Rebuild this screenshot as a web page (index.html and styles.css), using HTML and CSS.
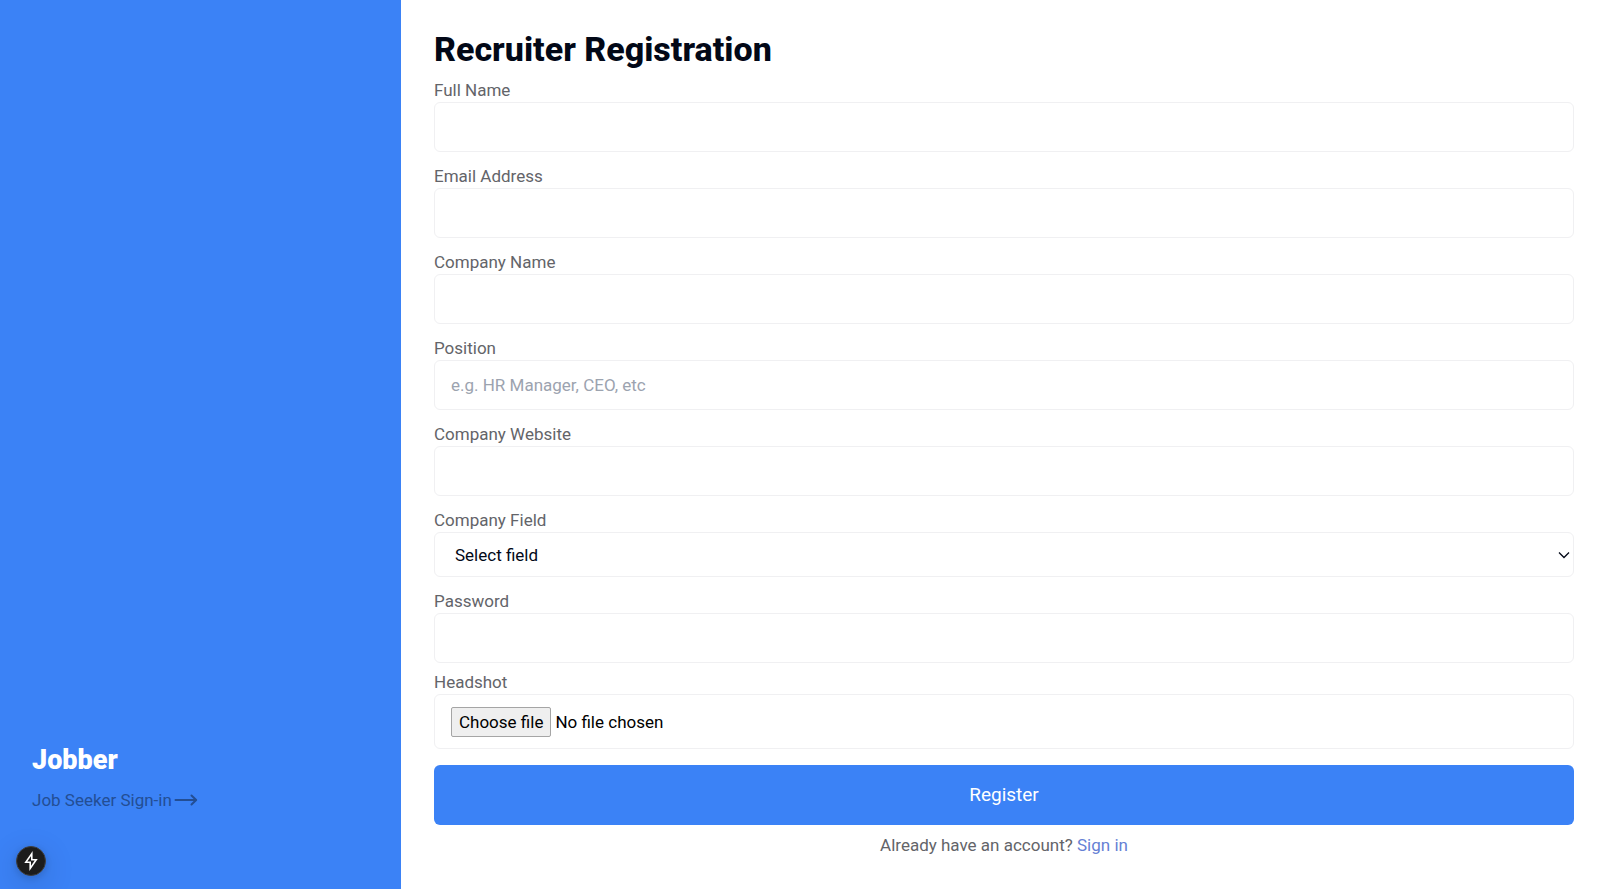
FILE: index.html
```html
<!DOCTYPE html>
<html lang="en">
<head>
<meta charset="utf-8">
<meta name="viewport" content="width=device-width, initial-scale=1">
<title>Recruiter Registration</title>
<link rel="stylesheet" href="styles.css">
</head>
<body>
<div class="layout">
  <aside class="sidebar">
    <h2 class="brand">Jobber</h2>
    <a class="seeker-link" href="#">Job Seeker Sign-in<svg class="arrow" viewBox="0 0 24 12" aria-hidden="true"><path d="M1.500 6H22M17.500 1.500L22.200 6L17.500 10.500"/></svg></a>
    <button class="dev-badge" type="button" aria-label="Open developer tools">
      <svg class="bolt" viewBox="0 0 16 20" aria-hidden="true"><path d="M8.800 2.600L2.800 11.300H7.200V17.400L13.200 8.700H8.800Z"/></svg>
    </button>
  </aside>
  <main class="main">
    <h1 class="title">Recruiter Registration</h1>
    <form class="form">
      <div class="field"><label for="name">Full Name</label><input class="control" id="name" type="text"></div>
      <div class="field"><label for="email">Email Address</label><input class="control" id="email" type="email"></div>
      <div class="field"><label for="company">Company Name</label><input class="control" id="company" type="text"></div>
      <div class="field"><label for="position">Position</label><input class="control" id="position" type="text" placeholder="e.g. HR Manager, CEO, etc"></div>
      <div class="field"><label for="website">Company Website</label><input class="control" id="website" type="url"></div>
      <div class="field">
        <label for="industry">Company Field</label>
        <div class="select-wrap">
          <select class="control select" id="industry"><option>Select field</option></select>
          <svg class="chevron" viewBox="0 0 12 8" aria-hidden="true"><path d="M1 1.500L6 6.500L11 1.500"/></svg>
        </div>
      </div>
      <div class="field field-tight"><label for="password">Password</label><input class="control" id="password" type="password"></div>
      <div class="field field-last">
        <label for="headshot">Headshot</label>
        <div class="control file-box">
          <span class="file-button">Choose file</span><span>No file chosen</span>
          <input class="file-input" id="headshot" type="file">
        </div>
      </div>
      <button class="submit" type="submit">Register</button>
    </form>
    <p class="signin">Already have an account? <a href="#">Sign in</a></p>
  </main>
</div>
</body>
</html>
```
FILE: styles.css
```css
*, *::before, *::after { box-sizing: border-box; }

body {
  margin: 0;
  background: #fff;
  color: #020817;
  font-family: Roboto, "Liberation Sans", sans-serif;
  font-size: 17px;
  line-height: 24px;
}

h1, h2, p { margin: 0; }
input, select, button { font: inherit; color: inherit; }

.layout {
  display: grid;
  grid-template-columns: 401px minmax(0, 1fr);
  min-height: 100vh;
}

.sidebar {
  display: flex;
  flex-direction: column;
  justify-content: flex-end;
  align-items: flex-start;
  gap: 12px;
  padding: 32px 32px 77px;
  background: #3b82f6;
}

.brand {
  color: #fff;
  font-size: 27px;
  line-height: 32px;
  font-weight: 900;
}

.seeker-link {
  display: flex;
  align-items: center;
  gap: 2px;
  color: #234e94;
  text-decoration: none;
}

.arrow { width: 24px; height: 12px; }
.arrow path, .bolt path, .chevron path {
  fill: none;
  stroke: currentColor;
  stroke-width: 2;
  stroke-linecap: round;
  stroke-linejoin: round;
}

.dev-badge {
  position: fixed;
  left: 16px;
  bottom: 13px;
  display: flex;
  align-items: center;
  justify-content: center;
  width: 30px;
  height: 30px;
  padding: 0;
  border: 1px solid #3e3e3e;
  border-radius: 50%;
  background: #1c1c1c;
  color: #fff;
  box-shadow: 0 8px 32px rgba(0, 0, 0, 0.16), 0 2px 8px rgba(0, 0, 0, 0.16);
}

.bolt { width: 16px; height: 20px; }
.bolt path { stroke-width: 1.600; stroke-linejoin: miter; }

.main { padding: 29px 26px 24px 33px; }

.title {
  margin-bottom: 9px;
  font-size: 34px;
  line-height: 40px;
  font-weight: 800;
}

.form { display: flex; flex-direction: column; }

.field {
  display: flex;
  flex-direction: column;
  margin-bottom: 12px;
}
.field-tight { margin-bottom: 7px; }
.field-last { margin-bottom: 16px; }

.field label { color: #636469; }

.control {
  width: 100%;
  height: 50px;
  padding: 0 16px;
  border: 1px solid #f0f0f2;
  border-radius: 6px;
  background: #fff;
}
.control::placeholder { color: #9ca3af; opacity: 1; }

.select-wrap { position: relative; }
.select {
  display: block;
  height: 45px;
  padding-left: 20px;
  appearance: none;
}
.chevron {
  position: absolute;
  right: 4px;
  top: 19px;
  width: 12px;
  height: 8px;
  pointer-events: none;
}
.chevron path { stroke-width: 1.300; stroke-linecap: butt; stroke-linejoin: miter; }

.file-box {
  position: relative;
  display: flex;
  align-items: center;
  gap: 4px;
  height: 55px;
  color: #000;
}
.file-button {
  padding: 2px 7px;
  border: 1px solid #a5a5a5;
  border-radius: 2px;
  background: #efefef;
}
.file-input {
  position: absolute;
  inset: 0;
  width: 100%;
  opacity: 0;
}

.submit {
  height: 60px;
  border: 0;
  border-radius: 6px;
  background: #3b82f6;
  color: #fff;
  font-size: 19px;
}

.signin {
  margin-top: 8px;
  color: #636469;
  text-align: center;
}
.signin a { color: #6580d4; text-decoration: none; }
```
